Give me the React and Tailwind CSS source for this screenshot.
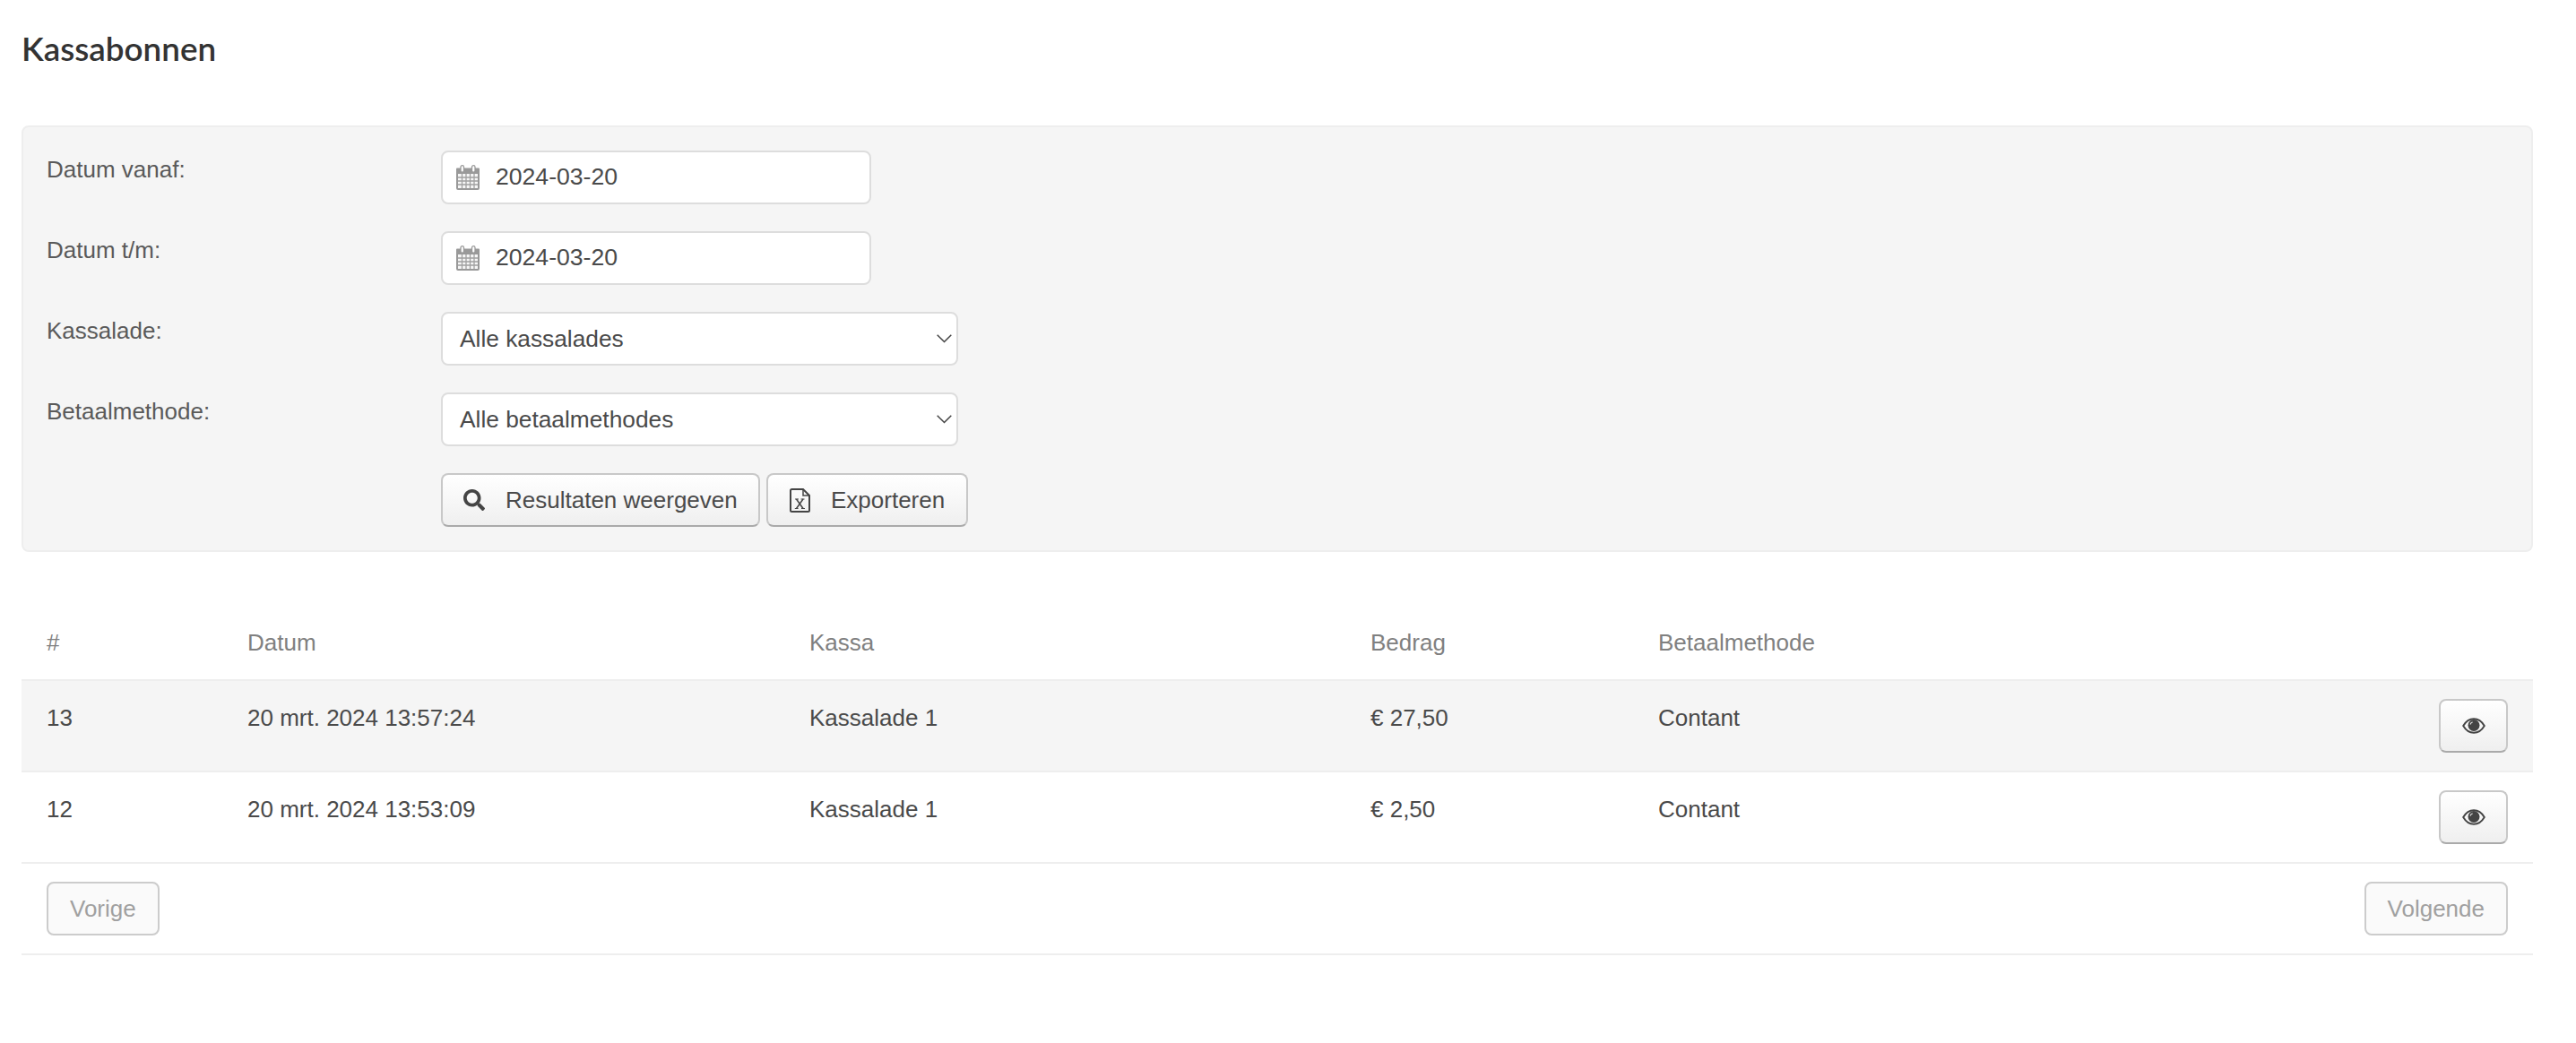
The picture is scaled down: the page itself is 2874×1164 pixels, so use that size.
import { FaSearch } from 'react-icons/fa';

const rows = [
  { id: 13, date: '20 mrt. 2024 13:57:24', kassa: 'Kassalade 1', amount: '€ 27,50', method: 'Contant', striped: true },
  { id: 12, date: '20 mrt. 2024 13:53:09', kassa: 'Kassalade 1', amount: '€ 2,50', method: 'Contant', striped: false },
];

const CalendarIcon = () => (
  <svg width="26" height="28" viewBox="0 0 26 28" className="shrink-0">
    <path d="M1 3.500h24a1 1 0 0 1 1 1V26a2 2 0 0 1-2 2H2a2 2 0 0 1-2-2V4.500a1 1 0 0 1 1-1z" fill="#999" />
    <rect x="2" y="10" width="22" height="16" fill="#f6f6f6" />
    <path d="M2 14h22M2 18h22M2 22h22M6.500 10v16M11 10v16M15.500 10v16M20 10v16" stroke="#a0a0a0" strokeWidth="1.300" />
    <rect x="5" y="0.700" width="3.500" height="7.500" rx="1.700" fill="#fff" stroke="#999" strokeWidth="1.300" />
    <rect x="17.500" y="0.700" width="3.500" height="7.500" rx="1.700" fill="#fff" stroke="#999" strokeWidth="1.300" />
  </svg>
);

const ExcelIcon = () => (
  <svg width="23" height="27" viewBox="0 0 23 27" fill="none" className="shrink-0">
    <path d="M2.500 1h12.500l7 7V24.500a1.500 1.500 0 0 1-1.500 1.500H2.500A1.500 1.500 0 0 1 1 24.500V2.500A1.500 1.500 0 0 1 2.500 1z" stroke="#444" strokeWidth="2" />
    <path d="M15 1v7h7" stroke="#444" strokeWidth="1.500" />
    <path d="M7.500 12l7.500 10.500M15 12L7.500 22.500" stroke="#444" strokeWidth="1.500" />
    <path d="M6 12h4M12.500 12h4M5.800 22.500h3.800M13 22.500h4" stroke="#444" strokeWidth="1.200" />
  </svg>
);

const EyeIcon = () => (
  <svg width="26" height="18" viewBox="0 0 26 18" fill="none" className="shrink-0">
    <path d="M1.200 9C4 4.200 8.200 1.200 13 1.200S22 4.200 24.800 9C22 13.800 17.800 16.800 13 16.800S4 13.800 1.200 9z" stroke="#444" strokeWidth="1.900" />
    <circle cx="13" cy="8.500" r="6.500" fill="#444" />
    <path d="M9 7.500c.3-1.400 1.200-2.300 2.600-2.700" stroke="#ddd" strokeWidth="1.200" />
  </svg>
);

const Chevron = () => (
  <svg width="17" height="10" viewBox="0 0 17 10" fill="none" className="shrink-0">
    <path d="M0.700 0.700l7.800 7.800 7.800-7.800" stroke="#444" strokeWidth="1.500" />
  </svg>
);

const Button = ({ className = '', children }) => (
  <button className={`flex h-[60px] items-center rounded-lg border-2 border-[#c8c8c8] border-b-[#aaa] bg-gradient-to-b from-white to-[#efefef] text-[#4a4a4a] ${className}`}>
    {children}
  </button>
);

const DisabledButton = ({ children }) => (
  <button className="flex h-[60px] items-center rounded-lg border-2 border-[#ccc] bg-[#fafafa] px-6 text-[#a0a0a0]">
    {children}
  </button>
);

const FormRow = ({ label, children }) => (
  <div className="flex">
    <label className="w-[440px] pt-[3px] leading-[36px] text-[#5a5a5a]">{label}</label>
    {children}
  </div>
);

const DateInput = ({ value }) => (
  <div className="flex h-[60px] w-[480px] items-center gap-[18px] rounded-lg border-2 border-[#ddd] bg-white pl-[15px]">
    <CalendarIcon />
    <span className="text-[26.6px]">{value}</span>
  </div>
);

const SelectBox = ({ value }) => (
  <div className="flex h-[60px] w-[577px] items-center justify-between rounded-lg border-2 border-[#ddd] bg-white pr-[5px] pl-[19px]">
    <span className="pt-px text-[26.3px]">{value}</span>
    <Chevron />
  </div>
);

const columns = 'grid grid-cols-[252px_627px_626px_321px_1fr_105px]';

export default function App() {
  return (
    <div className="min-h-[1164px] bg-white pr-[48px] pl-6 font-['Liberation_Sans',Arial,sans-serif] text-[26px] text-[#4a4a4a]">
      <h1 className="pt-[32px] font-['Lato',sans-serif] text-[36.8px] leading-[44px] font-semibold text-[#333]">Kassabonnen</h1>

      <div className="mt-[64px] flex h-[476px] flex-col gap-[30px] rounded-lg border-2 border-[#eee] bg-[#f5f5f5] px-[26px] pt-[26px]">
        <FormRow label="Datum vanaf:"><DateInput value="2024-03-20" /></FormRow>
        <FormRow label="Datum t/m:"><DateInput value="2024-03-20" /></FormRow>
        <FormRow label="Kassalade:"><SelectBox value="Alle kassalades" /></FormRow>
        <FormRow label="Betaalmethode:"><SelectBox value="Alle betaalmethodes" /></FormRow>
        <div className="flex gap-[7px] pl-[440px]">
          <Button className="w-[356px] gap-[23px] pl-[23px]">
            <FaSearch className="size-[24px] text-[#444]" />
            Resultaten weergeven
          </Button>
          <Button className="w-[225px] gap-[23px] pl-6">
            <ExcelIcon />
            Exporteren
          </Button>
        </div>
      </div>

      <div className={`${columns} mt-[66px] h-[78px] border-b-2 border-[#eee] pt-[19px] leading-[32px] text-[#808080]`}>
        <div className="pl-7">#</div>
        <div>Datum</div>
        <div>Kassa</div>
        <div>Bedrag</div>
        <div>Betaalmethode</div>
      </div>

      {rows.map(row => (
        <div key={row.id} className={`${columns} h-[102px] border-b-2 border-[#eee] leading-[32px] ${row.striped ? 'bg-[#f5f5f5]' : 'bg-white'}`}>
          <div className="pt-[25px] pl-7">{row.id}</div>
          <div className="pt-[25px]">{row.date}</div>
          <div className="pt-[25px]">{row.kassa}</div>
          <div className="pt-[25px]">{row.amount}</div>
          <div className="pt-[25px]">{row.method}</div>
          <div className="flex items-center justify-end pr-7">
            <Button className="w-[78px] justify-center">
              <EyeIcon />
            </Button>
          </div>
        </div>
      ))}

      <div className="flex h-[102px] items-center justify-between border-b-2 border-[#eee] px-7">
        <DisabledButton>Vorige</DisabledButton>
        <DisabledButton>Volgende</DisabledButton>
      </div>
    </div>
  );
}
